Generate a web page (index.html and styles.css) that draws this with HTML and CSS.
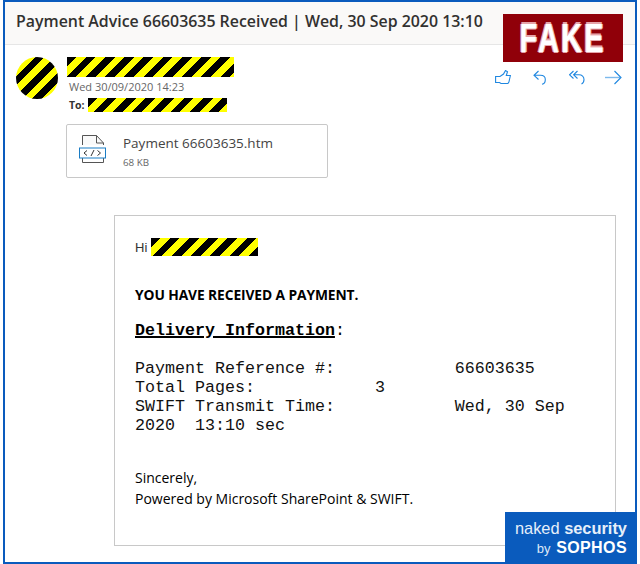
FILE: index.html
```html
<!DOCTYPE html>
<html lang="en">
<head>
<meta charset="utf-8">
<title>Payment Advice</title>
<link rel="stylesheet" href="styles.css">
</head>
<body>
<div class="frame">
  <header class="subject">Payment Advice 66603635 Received | Wed, 30 Sep 2020 13:10</header>
  <section class="head">
    <div class="avatar stripes"></div>
    <div class="meta">
      <div class="sender stripes"></div>
      <div class="date">Wed 30/09/2020 14:23</div>
      <div class="to"><b>To:</b><span class="to-mask stripes"></span></div>
    </div>
    <div class="actions">
      <svg class="act" width="16" height="15" viewBox="0 0 16 15" fill="none" stroke="#1f87e0" stroke-width="1.1"><path d="M.6 6.500h4.400L8.500 4l2-3.500 2 1.200-1.200 3.800h4.100l-1.500 6.500-1 1.500H6l-1.500-1H.6z"/></svg>
      <svg class="act" width="13" height="15" viewBox="0 0 13 15" fill="none" stroke="#1f87e0" stroke-width="1.1"><path d="M5.500 1 1 5.300l4.500 4.200M1 5.300h6.500c3 0 4.800 2 4.800 4.300S11 14 9 14.300"/></svg>
      <svg class="act act-all" width="16" height="15" viewBox="0 0 16 15" fill="none" stroke="#1f87e0" stroke-width="1.1"><path d="M4.500 1 .6 4.800l3.900 3.700M8.500 1 4.600 4.800l3.900 3.700M4.600 4.800H10c3 0 5 2 5 4.700 0 2-1 3.800-2.500 4.500"/></svg>
      <svg class="act act-fwd" width="17" height="15" viewBox="0 0 17 15" fill="none" stroke-width="1.1"><path d="M0 7.500h15" stroke="#7cb9ec" stroke-width="1.4"/><path d="M9.500 1 16 7.500 9.500 14" stroke="#1f87e0"/></svg>
    </div>
  </section>
  <section class="attach">
    <svg class="file" width="28" height="30" viewBox="0 0 28 30" fill="none">
      <path d="M3.500 10V.5h14l7 7.500V10" stroke="#555" fill="#fafafa"/>
      <path d="M17.500 .5v7.500h7" stroke="#555"/>
      <path d="M3.500 23v4.500h21V23" stroke="#555"/>
      <rect x=".5" y="13" width="26" height="10" fill="#fff" stroke="#1a7cc4"/>
      <path d="M8 15.500 5 18l3 2.500M18.500 15.500l3 2.500-3 2.500M15 15l-3 6" stroke="#333"/>
    </svg>
    <div>
      <div class="fname">Payment 66603635.htm</div>
      <div class="fsize">68 KB</div>
    </div>
  </section>
  <article class="mail">
    <p class="hi">Hi<span class="hi-mask stripes"></span></p>
    <p class="bold">YOU HAVE RECEIVED A PAYMENT.</p>
    <p class="delivery"><b>Delivery Information</b>:</p>
    <pre class="info">Payment Reference #:            66603635
Total Pages:            3
SWIFT Transmit Time:            Wed, 30 Sep
2020  13:10 sec</pre>
    <p class="sign">Sincerely,</p>
    <p class="power">Powered by Microsoft SharePoint &amp; SWIFT.</p>
  </article>
  <div class="fake"><span>FAKE</span></div>
  <div class="badge">
    <div class="b1">naked <b>security</b></div>
    <div class="b2">by <b>SOPHOS</b></div>
  </div>
</div>
</body>
</html>
```
FILE: styles.css
```css
html, body { margin: 0; padding: 0; background: #fff; }
body { width: 640px; height: 564px; overflow: hidden; font-family: "Open Sans", "Noto Sans", sans-serif; }
.frame { position: relative; box-sizing: border-box; width: 634px; height: 564px; margin-left: 3px; border: 2px solid #0a5bbd; background: #fff; overflow: hidden; }
.stripes { background: repeating-linear-gradient(135deg, #000 0, #000 6.8px, #ff0 6.8px, #ff0 13.6px); }
.subject { box-sizing: border-box; height: 43px; padding: 8px 0 0 11px; background: #faf9f8; border-bottom: 1px solid #e6e6e6; font-size: 15.900px; font-weight: 600; line-height: 22px; color: #323130; white-space: nowrap; }
.head { display: flex; box-sizing: border-box; height: 69px; padding: 12px 0 0 11px; }
.avatar { width: 42px; height: 42px; border-radius: 50%; }
.meta { width: 300px; margin-left: 9px; }
.sender { width: 167px; height: 20px; }
.date { margin: 2px 0 0 2px; font-size: 11px; line-height: 16px; color: #666; white-space: nowrap; }
.to { display: flex; align-items: center; margin: 3px 0 0 2px; font-size: 10.500px; line-height: 14px; color: #333; }
.to-mask { display: block; width: 139px; height: 14px; margin-left: 3px; }
.actions { display: flex; align-items: center; gap: 22px; margin-left: 128px; height: 41px; }
.act { flex: none; }
.act-all { margin-left: 1px; }
.act-fwd { margin-left: -2px; }
.attach { display: flex; align-items: flex-start; box-sizing: border-box; width: 262px; height: 54px; margin: 10px 0 0 61px; padding: 10px 0 0 12px; border: 1px solid #c8c8c8; border-radius: 2px; }
.file { flex: none; margin-right: 16px; }
.fname { font-size: 13.500px; line-height: 16px; color: #444; white-space: nowrap; }
.fsize { font-size: 9.800px; line-height: 14px; color: #666; margin-top: 5px; }
.mail { box-sizing: border-box; width: 502px; height: 331px; margin: 37px 0 0 109px; padding: 22px 10px 0 20px; border: 1px solid #c8c8c8; color: #000; }
.mail p { margin: 0; }
.hi { display: flex; align-items: center; height: 18px; font-family: "Liberation Sans", sans-serif; font-size: 13px; color: #333; }
.hi-mask { display: block; width: 107px; height: 18px; margin-left: 4px; }
.mail .bold { margin-top: 30px; font-size: 13.800px; font-weight: 700; line-height: 18px; white-space: nowrap; letter-spacing: -.1px; }
.mail .delivery { margin-top: 17px; font-family: "Liberation Mono", monospace; font-size: 16.670px; line-height: 19px; }
.delivery b { text-decoration: underline; text-decoration-thickness: 2px; }
.info { margin: 19px 0 0; font-family: "Liberation Mono", monospace; font-size: 16.670px; line-height: 19px; color: #111; }
.mail .sign { margin-top: 32px; font-size: 14px; line-height: 21px; }
.power { font-size: 14px; line-height: 21px; white-space: nowrap; }
.fake { position: absolute; left: 498px; top: 12px; width: 120px; height: 48px; display: flex; align-items: center; justify-content: center; background: #900009; }
.fake span { display: block; font-family: "Liberation Sans", sans-serif; font-weight: 700; font-size: 38px; line-height: 1; letter-spacing: 3px; color: #fff; -webkit-text-stroke: 1.500px #a51f2c; paint-order: stroke fill; text-shadow: 1.500px 0 #e5a3a9, -1.500px 0 #e5a3a9, 0 1.500px #e5a3a9, 0 -1.500px #e5a3a9; transform: scaleX(.76) scaleY(1.05); }
.badge { position: absolute; left: 500px; top: 510px; width: 130px; height: 51px; box-sizing: border-box; padding: 7px 8px 0 0; background: #0a5bbd; color: #fff; font-family: "Liberation Sans", sans-serif; text-align: right; }
.b1 { font-size: 16.400px; line-height: 19px; color: #e6effa; white-space: nowrap; }
.b2 { font-size: 13px; line-height: 19px; color: #dce8f8; white-space: nowrap; }
.b2 b { font-size: 16px; font-weight: 700; letter-spacing: .4px; color: #fff; margin-left: 2px; }
```
